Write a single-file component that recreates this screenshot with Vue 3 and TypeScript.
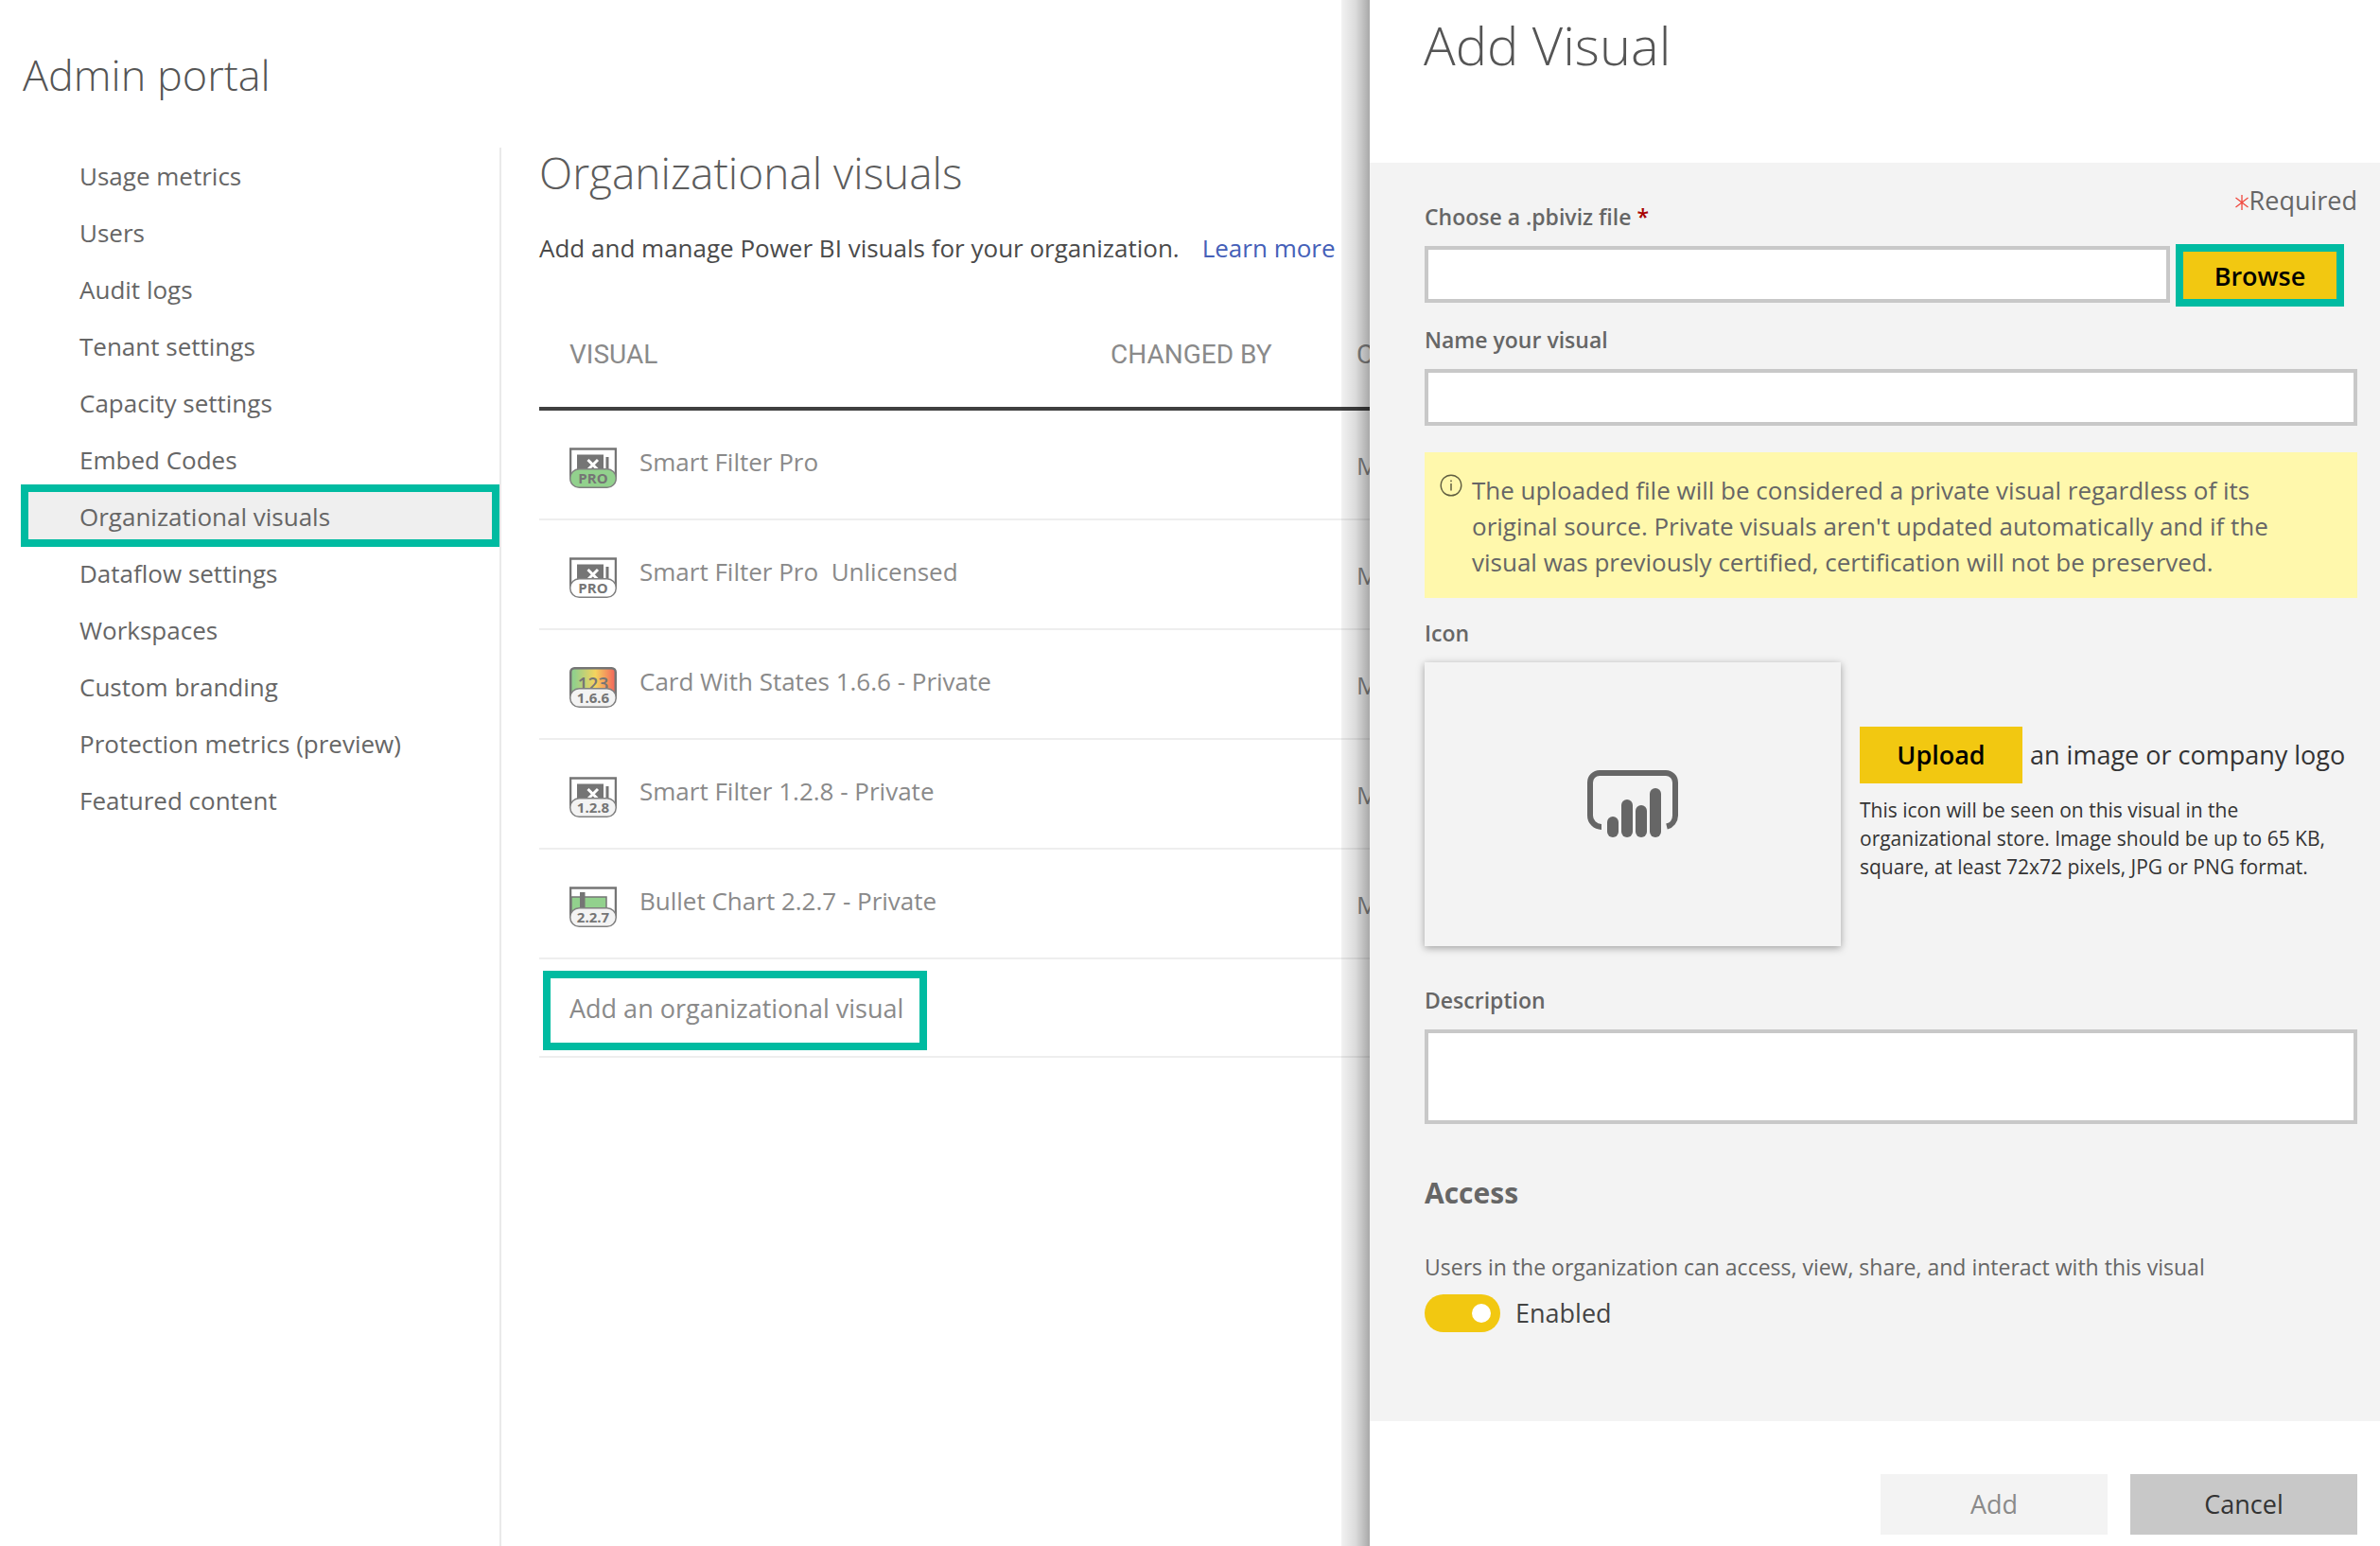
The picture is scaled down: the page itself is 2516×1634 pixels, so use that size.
<script setup lang="ts">
import { ref } from 'vue'

type Glyph = 'filter' | 'card' | 'bullet'

interface Visual {
  name: string
  glyph: Glyph
  tag: string
  fill: string
}

const navItems: string[] = [
  'Usage metrics',
  'Users',
  'Audit logs',
  'Tenant settings',
  'Capacity settings',
  'Embed Codes',
  'Organizational visuals',
  'Dataflow settings',
  'Workspaces',
  'Custom branding',
  'Protection metrics (preview)',
  'Featured content',
]
const current = ref('Organizational visuals')

const visuals: Visual[] = [
  { name: 'Smart Filter Pro', glyph: 'filter', tag: 'PRO', fill: '#92d18d' },
  { name: 'Smart Filter Pro\u00a0 Unlicensed', glyph: 'filter', tag: 'PRO', fill: '#ffffff' },
  { name: 'Card With States 1.6.6 - Private', glyph: 'card', tag: '1.6.6', fill: '#f3f3f3' },
  { name: 'Smart Filter 1.2.8 - Private', glyph: 'filter', tag: '1.2.8', fill: '#f3f3f3' },
  { name: 'Bullet Chart 2.2.7 - Private', glyph: 'bullet', tag: '2.2.7', fill: '#f3f3f3' },
]

const fileName = ref('')
const visualName = ref('')
const description = ref('')
const enabled = ref(true)
</script>

<template>
  <div class="page">
    <div class="workspace">
      <header class="portal-header">
        <h1>Admin portal</h1>
      </header>
      <div class="columns">
        <nav class="side-nav" aria-label="Admin portal">
          <ul>
            <li v-for="item in navItems" :key="item">
              <a href="#" :class="{ current: item === current }" @click.prevent="current = item">{{ item }}</a>
            </li>
          </ul>
        </nav>
        <main class="content">
          <h2>Organizational visuals</h2>
          <p class="intro">
            Add and manage Power BI visuals for your organization.<a class="learn" href="#">Learn more</a>
          </p>
          <table class="visuals">
            <colgroup>
              <col class="col-visual" />
              <col class="col-by" />
              <col />
            </colgroup>
            <thead>
              <tr>
                <th scope="col">VISUAL</th>
                <th scope="col">CHANGED BY</th>
                <th scope="col">C</th>
              </tr>
            </thead>
            <tbody>
              <tr v-for="v in visuals" :key="v.name">
                <td>
                  <div class="visual">
                    <svg class="visual-icon" width="50" height="43" viewBox="0 0 50 43" aria-hidden="true">
                      <template v-if="v.glyph === 'filter'">
                        <path d="M1 32V1.500H49V32" fill="#fff" stroke="#757575" stroke-width="2.500" />
                        <rect x="8" y="7.500" width="28" height="20" fill="#757575" />
                        <path d="M19.500 13L30 23.500M30 13L19.500 23.500" stroke="#fff" stroke-width="3" />
                        <rect x="38.500" y="10" width="3" height="16" fill="#757575" />
                      </template>
                      <template v-else-if="v.glyph === 'card'">
                        <defs>
                          <linearGradient id="states" x1="0" x2="1" y1="0" y2="0">
                            <stop offset="0.080" stop-color="#92d08c" />
                            <stop offset="0.550" stop-color="#f4d35e" />
                            <stop offset="0.950" stop-color="#f3705c" />
                          </linearGradient>
                        </defs>
                        <rect x="1.250" y="1.250" width="47.500" height="34" rx="4" fill="url(#states)" stroke="#757575" stroke-width="2.500" />
                        <text x="25" y="25" text-anchor="middle" class="digits">123</text>
                      </template>
                      <template v-else>
                        <path d="M1 32V1.500H49V32" fill="#fff" stroke="#757575" stroke-width="2.500" />
                        <rect x="2" y="11" width="37" height="18" fill="#92d18d" stroke="#757575" stroke-width="1.500" />
                        <rect x="11" y="6" width="5.500" height="20" fill="#757575" />
                      </template>
                      <rect x="0.750" y="22.750" width="48.500" height="19.500" rx="9.500" :fill="v.fill" stroke="#808080" stroke-width="1.500" />
                      <text x="25" y="38" text-anchor="middle" class="tag">{{ v.tag }}</text>
                    </svg>
                    <span>{{ v.name }}</span>
                  </div>
                </td>
                <td></td>
                <td class="changed">M</td>
              </tr>
            </tbody>
          </table>
          <div class="add-row">
            <button type="button" class="add-link">Add an organizational visual</button>
          </div>
        </main>
      </div>
    </div>

    <aside class="panel" aria-labelledby="panel-title">
      <header class="panel-header">
        <h2 id="panel-title">Add Visual</h2>
      </header>
      <form class="panel-body" @submit.prevent>
        <div class="first-line">
          <label class="label" for="file">Choose a .pbiviz file <span class="star">*</span></label>
          <span class="required">
            <svg width="16" height="18" viewBox="0 0 16 18" aria-hidden="true">
              <path d="M8 1V17M1.500 4L14.500 14M14.500 4L1.500 14" fill="none" stroke="#f0483e" stroke-width="1.300" />
            </svg>Required
          </span>
        </div>
        <div class="file-row">
          <input id="file" v-model="fileName" class="box" type="text" />
          <button type="button" class="browse">Browse</button>
        </div>

        <label class="label name-label" for="name">Name your visual</label>
        <input id="name" v-model="visualName" class="box" type="text" />

        <div class="notice">
          <svg width="24" height="24" viewBox="0 0 24 24" aria-hidden="true">
            <circle cx="12" cy="12" r="10.800" fill="none" stroke="#605e40" stroke-width="1.400" />
            <path d="M12 10V17.500M12 6.500V8.200" stroke="#605e40" stroke-width="1.500" />
          </svg>
          <p>
            The uploaded file will be considered a private visual regardless of its original source.
            Private visuals aren't updated automatically and if the visual was previously certified,
            certification will not be preserved.
          </p>
        </div>

        <span class="label icon-label">Icon</span>
        <div class="icon-row">
          <div class="preview">
            <svg width="96" height="72" viewBox="0 0 96 72" aria-label="Power BI">
              <path
                d="M15 60A12 12 0 0 1 3 48V13A10 10 0 0 1 13 3H83A10 10 0 0 1 93 13V48A12 12 0 0 1 84 59.500"
                fill="none" stroke="#666" stroke-width="6"
              />
              <g fill="#666">
                <rect x="21" y="49" width="12" height="22" rx="6" />
                <rect x="36" y="31" width="12" height="40" rx="6" />
                <rect x="51" y="37" width="12" height="34" rx="6" />
                <rect x="66" y="19" width="12" height="52" rx="6" />
              </g>
            </svg>
          </div>
          <div class="upload-info">
            <div class="upload-line">
              <button type="button" class="upload">Upload</button>
              <span>an image or company logo</span>
            </div>
            <p>
              This icon will be seen on this visual in the organizational store. Image should be up to
              65 KB, square, at least 72x72 pixels, JPG or PNG format.
            </p>
          </div>
        </div>

        <label class="label description-label" for="description">Description</label>
        <textarea id="description" v-model="description" class="box area"></textarea>

        <h3>Access</h3>
        <p class="access-text">Users in the organization can access, view, share, and interact with this visual</p>
        <label class="toggle">
          <input v-model="enabled" type="checkbox" role="switch" />
          <span>Enabled</span>
        </label>
      </form>
      <footer class="panel-footer">
        <button type="button" class="add" disabled>Add</button>
        <button type="button" class="cancel">Cancel</button>
      </footer>
    </aside>
  </div>
</template>

<style>
body {
  margin: 0;
  background: #fff;
}
</style>

<style scoped>
* {
  box-sizing: border-box;
}

.page {
  display: flex;
  min-height: 100vh;
  color: #666;
  font-family: 'Open Sans', 'Noto Sans', sans-serif;
  font-size: 27px;
  line-height: 38px;
}

h1,
h2,
h3,
p,
ul {
  margin: 0;
  padding: 0;
}

button,
input,
textarea {
  font: inherit;
  border-radius: 0;
}

button {
  cursor: pointer;
}

/* Portal */
.workspace {
  display: flex;
  flex: 1;
  flex-direction: column;
  min-width: 0;
  overflow: hidden;
}

.portal-header {
  height: 156px;
  padding: 49px 24px 0;
}

h1,
h2 {
  font-size: 45px;
  font-weight: 300;
  line-height: 60px;
}

h1 {
  color: #555;
}

.columns {
  display: flex;
  flex: 1;
}

.side-nav {
  flex: 0 0 530px;
  border-right: 2px solid #eaeaea;
}

.side-nav ul {
  list-style: none;
}

.side-nav a {
  position: relative;
  display: block;
  margin-left: 22px;
  padding-left: 62px;
  color: #666;
  font-size: 26px;
  line-height: 60px;
  text-decoration: none;
}

.side-nav a.current {
  background: #efefef;
}

.side-nav a.current::after {
  content: '';
  position: absolute;
  inset: -4px 0 -2px;
  border: 8px solid #00bba1;
}

.content {
  flex: 1;
  min-width: 0;
  padding-left: 40px;
}

.content h2 {
  color: #5c5c5c;
  font-size: 46px;
  line-height: 53px;
}

.intro {
  margin-top: 34px;
  color: #4a4a4a;
  font-size: 26px;
  white-space: nowrap;
}

.learn {
  margin-left: 24px;
  color: #4560b8;
  text-decoration: none;
}

.visuals {
  width: 100%;
  margin-top: 43px;
  border-spacing: 0;
  table-layout: fixed;
  color: #8a8a8a;
  font-size: 26px;
}

.col-visual {
  width: 572px;
}

.col-by {
  width: 260px;
}

th {
  padding: 35px 0 39px 32px;
  border-bottom: 4px solid #404040;
  font-family: Roboto, sans-serif;
  font-size: 28px;
  font-weight: 400;
  line-height: 32px;
  text-align: left;
  white-space: nowrap;
}

td {
  height: 116px;
  padding: 35px 0 0 32px;
  border-bottom: 2px solid #eee;
  vertical-align: top;
}

td.changed {
  padding-top: 39px;
}

.visual {
  display: flex;
  gap: 24px;
}

.visual-icon {
  flex: none;
  margin-top: 4px;
}

.tag {
  fill: #757575;
  font-size: 15px;
  font-weight: 700;
}

.digits {
  fill: #757575;
  font-size: 19px;
  font-weight: 600;
}

.add-row {
  display: flex;
  padding: 12px 4px 6px;
  border-bottom: 2px solid #eee;
}

.add-link {
  padding: 13px 17px 17px 20px;
  border: 8px solid #00bba1;
  background: #fff;
  color: #8a8a8a;
}

/* Panel */
.panel {
  position: relative;
  display: flex;
  flex: 0 0 1068px;
  flex-direction: column;
  background: #fff;
}

.panel::before {
  content: '';
  position: absolute;
  top: 0;
  bottom: 0;
  left: -30px;
  width: 30px;
  background: linear-gradient(to right, rgba(0, 0, 0, 0.05), rgba(0, 0, 0, 0.14) 50%, rgba(0, 0, 0, 0.34));
}

.panel-header {
  height: 172px;
  padding: 17px 58px 0 57px;
}

.panel-header h2 {
  color: #555;
  font-size: 56px;
}

.panel-body {
  display: flex;
  flex: 1;
  flex-direction: column;
  align-items: stretch;
  padding: 21px 24px 0 58px;
  background: #f3f3f3;
}

.label {
  margin-bottom: 15px;
  font-size: 23px;
  font-weight: 600;
  line-height: 32px;
}

.first-line {
  display: flex;
  align-items: flex-start;
  justify-content: space-between;
  height: 65px;
}

.first-line .label {
  margin-top: 20px;
}

.star {
  color: #a80000;
}

.required {
  display: flex;
  align-items: center;
}

.required svg {
  margin-top: 4px;
}

.box {
  display: block;
  width: 100%;
  height: 60px;
  padding: 0 12px;
  border: 4px solid #c8c8c8;
  background: #fff;
  color: #333;
}

.file-row {
  display: flex;
  gap: 6px;
  padding-right: 14px;
}

.file-row .box {
  flex: 1;
  margin-top: 2px;
}

.browse {
  width: 178px;
  height: 66px;
  padding: 2px 0 0;
  border: 8px solid #00bba1;
  background: #f2c811;
  color: #000;
  font-weight: 600;
}

.name-label {
  margin-top: 19px;
}

.notice {
  display: flex;
  gap: 10px;
  margin-top: 28px;
  padding: 21px 24px 19px 16px;
  background: #fff8ac;
  font-size: 26px;
}

.notice svg {
  flex: none;
  margin-top: 2px;
}

.icon-label {
  margin-top: 21px;
}

.icon-row {
  display: flex;
  gap: 20px;
  align-items: center;
}

.preview {
  display: flex;
  flex: 0 0 440px;
  align-items: center;
  justify-content: center;
  height: 300px;
  box-shadow: 0 2px 8px rgba(0, 0, 0, 0.35);
}

.upload-info {
  flex: 1;
  color: #333;
}

.upload-line {
  display: flex;
  gap: 8px;
  align-items: center;
  white-space: nowrap;
}

.upload {
  width: 172px;
  height: 60px;
  padding: 0;
  border: 0;
  background: #f2c811;
  color: #000;
  font-weight: 600;
}

.upload-info p {
  margin: 13px 0 1px;
  font-size: 21px;
  line-height: 30px;
}

.description-label {
  margin-top: 41px;
}

.area {
  height: 100px;
  resize: none;
}

h3 {
  margin-top: 53px;
  font-size: 30px;
  font-weight: 700;
  line-height: 40px;
}

.access-text {
  margin-top: 42px;
  font-size: 23px;
  line-height: 32px;
}

.toggle {
  display: flex;
  gap: 16px;
  align-items: center;
  align-self: flex-start;
  margin-top: 13px;
  color: #444;
  line-height: 40px;
}

.toggle input {
  display: flex;
  align-items: center;
  width: 80px;
  height: 40px;
  margin: 0;
  padding: 0 10px;
  border-radius: 20px;
  appearance: none;
  background: #c8c8c8;
}

.toggle input::before {
  content: '';
  width: 20px;
  height: 20px;
  border-radius: 50%;
  background: #fff;
}

.toggle input:checked {
  justify-content: flex-end;
  background: #f2c811;
}

.panel-footer {
  display: flex;
  gap: 24px;
  justify-content: flex-end;
  height: 132px;
  padding: 56px 24px 12px;
}

.panel-footer button {
  width: 240px;
  height: 64px;
  padding: 0;
  border: 0;
}

.add {
  background: #f3f3f3;
  color: #8a8a8a;
}

.cancel {
  background: #c8c8c8;
  color: #333;
}
</style>
